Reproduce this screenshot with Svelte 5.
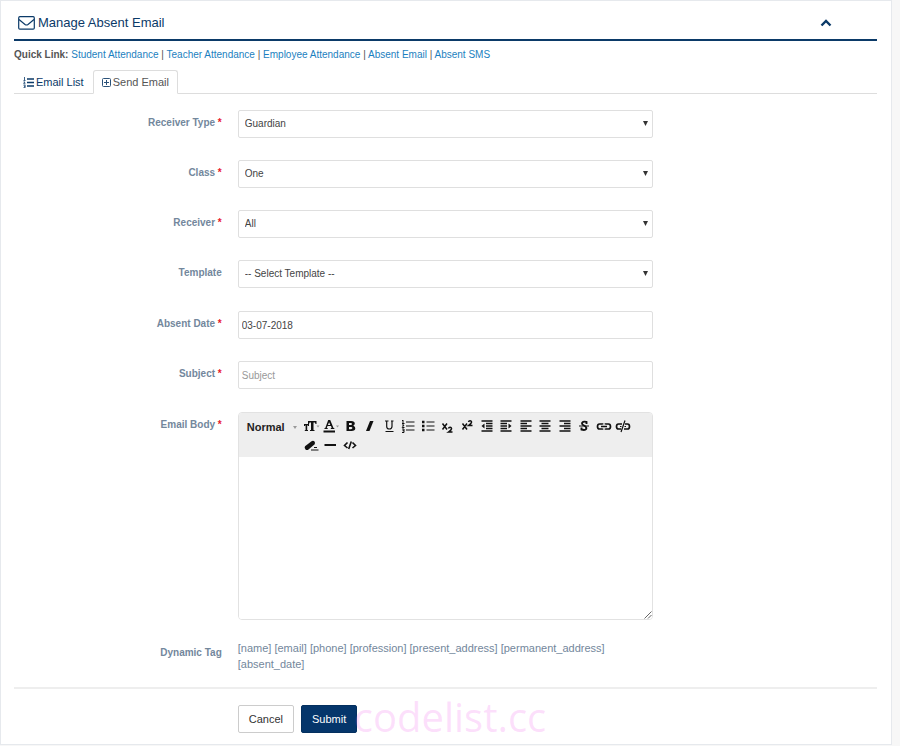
<script>
  let open = $state(true);
  let date = $state('03-07-2018');
  let subject = $state('');

  const links = ['Student Attendance', 'Teacher Attendance', 'Employee Attendance', 'Absent Email', 'Absent SMS'];

  const selects = [
    { id: 'receiver-type', label: 'Receiver Type', required: true, options: ['Guardian', 'Student'] },
    { id: 'class', label: 'Class', required: true, options: ['One', 'Two', 'Three'] },
    { id: 'receiver', label: 'Receiver', required: true, options: ['All'] },
    { id: 'template', label: 'Template', required: false, options: ['-- Select Template --'] }
  ];

  // Tool icons on an 18 x 16 grid: `fill` holds solid parts, `line` strokes, `faint` the menu arrows.
  const tools = [
    { name: 'Font size', fill: 'M6 3h8.500v3h-1l-.5-1.500h-1.500V12h1v1H8v-1h1V4.500H7.500L7 6H6zM2 6h5v2H6l-.3-.8h-.5V12h.8v1H2.800v-1h.8V7.200h-.4L3 8H2z', faint: 'M14.500 7.500h3L16 9.500z' },
    { name: 'Font color', fill: 'M7.200 2h2l3.300 8h.8v1H9.800v-1h.9l-.7-2H6.500l-.7 2h.9v1H3.500v-1h.8zM8.100 4.200L6.900 7h2.400zM2.500 12.500h11.500v2H2.500z', faint: 'M15 7.500h3l-1.500 2z' },
    { name: 'Bold', fill: 'M5.500 3h4.700q3.600 0 3.600 2.600 0 1.600-1.500 2.200Q14.300 8.400 14.300 10.300 14.300 13 10.500 13H5.500zM8 5v2h1.800q1.200 0 1.200-1t-1.200-1zM8 9v2.200h2q1.400 0 1.400-1.100T10 9z' },
    { name: 'Italic', fill: 'M10 3h3.500L9.500 13H6z' },
    { name: 'Underline', line: 'M5 3H8.500M11 3H13.500M6.700 3v5.500q0 2.500 2.600 2.500T12 8.500V3M5.500 13.500h8', w: 1.200 },
    { name: 'Ordered list', line: 'M7 4h8.500M7 8h8.500M7 12h8.500M4 2v3.500M3 2.500h1M3 5.500h2.500M3 7h2L3.200 9.500H5.500M3 11h2v3.500h-2M3.500 12.700h1.500', w: 1 },
    { name: 'Bulleted list', line: 'M7.500 4h8M7.500 8h8M7.500 12h8', fill: 'M3 2.700H5.500v2.600H3zM3 6.700H5.500v2.600H3zM3 10.700H5.500v2.600H3z', w: 1.200 },
    { name: 'Subscript', line: 'M4.500 5.500l4.500 6M9 5.500L4.500 11.500M10.500 10.500q.3-1.200 1.500-1.200 1.700 0 1.500 1.500Q13.300 12 10.500 14H14.500', w: 1.500 },
    { name: 'Superscript', line: 'M4.500 5.500l4.500 6M9 5.500L4.500 11.500M10.500 4q.3-1.200 1.500-1.200 1.700 0 1.500 1.500Q13.300 5.500 10.500 7.500H14.500', w: 1.500 },
    { name: 'Outdent', line: 'M3.500 3h11M8 5.500h6.500M8 8h6.500M8 10.500h6.500M3.500 13h11', fill: 'M3.500 8L6.500 5.500v5z', w: 1.700 },
    { name: 'Indent', line: 'M3.500 3h11M3.500 5.500h6.500M3.500 8h6.500M3.500 10.500h6.500M3.500 13h11', fill: 'M14.500 8L11.500 5.500v5z', w: 1.700 },
    { name: 'Align left', line: 'M3.500 3h11M3.500 5.500h6.500M3.500 8h11M3.500 10.500h6.500M3.500 13h11', w: 1.700 },
    { name: 'Align center', line: 'M3.500 3h11M5.500 5.500h7M3.500 8h11M5.500 10.500h7M3.500 13h11', w: 1.700 },
    { name: 'Align right', line: 'M3.500 3h11M8 5.500h6.500M3.500 8h11M8 10.500h6.500M3.500 13h11', w: 1.700 },
    { name: 'Strikethrough', line: 'M11.500 6V4Q8.500 3 7.300 4.500 6.300 6.200 9 7.500 12 9 11.200 11 10 12.600 6.500 11.500V9.500', w: 1.900, thin: 'M4 8h10' },
    { name: 'Link', line: 'M7.500 6.500V6H4.500Q2.500 6 2.500 8.500T4.500 11H7.500V10.500M10.500 6.500V6H13.500Q15.500 6 15.500 8.500T13.500 11H10.500V10.500M6 8.500H12', w: 1.700 },
    { name: 'Unlink', line: 'M8 6H4.500Q2.500 6 2.500 8.500T4.500 11H7M11 6H13.500Q15.500 6 15.500 8.500T13.500 11H10', w: 1.700, thin: 'M11 2.500L7 14M6 8.500h1.500M10.500 8.500H12' },
    { name: 'Remove format', line: 'M9 13h7.500M12 10.500h3', fill: 'M3 9.200L9.500 4.200q1.700-1 3 .3 1.200 1.700-.1 2.900L6.500 12.500q-1.500 1-3 0Q2 10.800 3 9.200z', w: 1.100 },
    { name: 'Horizontal rule', line: 'M3.500 8h11.500', w: 1.800 },
    { name: 'View source', line: 'M6.500 5.500L3.500 8.500l3 2.500M11.500 5.500l3 3-3 2.500M10.300 4.500l-2.600 7.500', w: 1.600 }
  ];
</script>

{#snippet star(required)}{#if required}<span class="star">*</span>{/if}{/snippet}

<main>
  <section class="panel">
    <header>
      <h1>
        <svg width="17" height="14" viewBox="0 0 17 14" fill="none" stroke="currentColor" stroke-width="1.200" aria-hidden="true">
          <rect x=".7" y=".7" width="15.600" height="12.400" rx="1.200" />
          <path d="M1 3.500L7 8.500q1.500 1 3 0L16 3.500" />
        </svg>
        Manage Absent Email
      </h1>
      <button class="collapse" aria-label="Toggle panel" aria-expanded={open} onclick={() => (open = !open)}>
        <svg width="12" height="8" viewBox="0 0 12 8" fill="none" stroke="currentColor" stroke-width="2.400" aria-hidden="true">
          <path d="M1.500 6.500L6 2l4.500 4.500" />
        </svg>
      </button>
    </header>

    {#if open}
      <nav class="quick">
        <strong>Quick Link:</strong>
        {#each links as link, i}{#if i}{' | '}{/if}<a href="#{link.toLowerCase().replace(' ', '-')}">{link}</a>{/each}
      </nav>

      <nav class="tabs">
        <a href="#list">
          <svg width="11" height="11" viewBox="0 0 11 11" fill="none" stroke="currentColor" aria-hidden="true">
            <path d="M4 2h7M4 5.500h7M4 9h7" stroke-width="1.700" />
            <path d="M1.500 0v3M.5 3.500h2M.5 5h1.500L.7 6.800h1.800M.5 8.200h1.700v2.400H.5M1 9.400h1" stroke-width=".8" />
          </svg>
          Email List
        </a>
        <a href="#send" class="active" aria-current="page">
          <svg width="9" height="9" viewBox="0 0 9 9" fill="none" stroke="#2b5279" aria-hidden="true">
            <rect x=".5" y=".5" width="8" height="8" rx="1" />
            <path d="M4.500 2v5M2 4.500h5" />
          </svg>
          Send Email
        </a>
      </nav>

      <form onsubmit={(e) => e.preventDefault()}>
        <div class="group">
          {#each selects as field}
            <div class="row">
              <label for={field.id}>{field.label} {@render star(field.required)}</label>
              <div class="control">
                <select id={field.id}>
                  {#each field.options as option}<option>{option}</option>{/each}
                </select>
                <svg class="caret" width="5" height="5" viewBox="0 0 5 5" aria-hidden="true"><path d="M0 0h5L2.500 5z" fill="#333" /></svg>
              </div>
            </div>
          {/each}
        </div>

        <div class="group">
          <div class="row">
            <label for="date">Absent Date {@render star(true)}</label>
            <div class="control"><input id="date" type="text" bind:value={date} /></div>
          </div>
          <div class="row">
            <label for="subject">Subject {@render star(true)}</label>
            <div class="control"><input id="subject" type="text" placeholder="Subject" bind:value={subject} /></div>
          </div>
        </div>

        <div class="row">
          <label for="body">Email Body {@render star(true)}</label>
          <div class="control">
            <div class="editor">
              <div class="toolbar">
                <button type="button" class="style">
                  Normal
                  <svg width="4" height="3" viewBox="0 0 4 3" aria-hidden="true"><path d="M0 0h4L2 3z" fill="#999" /></svg>
                </button>
                <div class="tools">
                  {#each tools as tool}
                    <button type="button" aria-label={tool.name}>
                      <svg width="18" height="16" viewBox="0 0 18 16" aria-hidden="true">
                        {#if tool.fill}<path d={tool.fill} fill="#111" fill-rule="evenodd" />{/if}
                        {#if tool.faint}<path d={tool.faint} fill="#999" />{/if}
                        {#if tool.line}<path d={tool.line} fill="none" stroke="#111" stroke-width={tool.w} />{/if}
                        {#if tool.thin}<path d={tool.thin} fill="none" stroke="#111" stroke-width="1.200" />{/if}
                      </svg>
                    </button>
                  {/each}
                </div>
              </div>
              <textarea id="body"></textarea>
              <svg class="grip" width="8" height="8" viewBox="0 0 8 8" fill="none" stroke="#666" aria-hidden="true"><path d="M.5 7.500l7-7M4 7.500L7.500 4" /></svg>
            </div>
          </div>
        </div>

        <div class="row tags">
          <span class="label">Dynamic Tag</span>
          <p class="control">[name] [email] [phone] [profession] [present_address] [permanent_address] [absent_date]</p>
        </div>

        <div class="row actions">
          <div class="control">
            <button type="button">Cancel</button>
            <button type="submit" class="primary">Submit</button>
            <span class="watermark">codelist.cc</span>
          </div>
        </div>
      </form>
    {/if}
  </section>
</main>

<style>
  :global(body) {
    margin: 0;
    background: #f7f7f7;
  }
  main {
    padding: 0 8px 1px 0;
    font: 10px/14px 'Liberation Sans', Arial, sans-serif;
    color: #555;
  }
  main :global(*) {
    box-sizing: border-box;
  }
  button, select, input, textarea {
    font: inherit;
    color: inherit;
    margin: 0;
  }
  svg {
    flex: none;
  }
  a {
    text-decoration: none;
  }
  .panel {
    padding: 0 14px 11px 13px;
    background: #fff;
    border: 1px solid #e6e9ed;
  }
  header {
    display: flex;
    justify-content: space-between;
    align-items: center;
    height: 40px;
    padding: 6px 45px 0 4px;
    border-bottom: 2px solid #0b3a68;
    color: #0b3a68;
  }
  h1 {
    display: flex;
    align-items: center;
    gap: 3px;
    margin: 0;
    font-size: 13px;
    font-weight: 400;
    line-height: 16px;
  }
  .collapse {
    display: flex;
    padding: 0;
    border: 0;
    background: none;
  }
  .quick {
    padding: 7px 0 8px;
  }
  .quick a {
    color: #1b7fc0;
  }
  .tabs {
    display: flex;
    border-bottom: 1px solid #ddd;
    font-size: 11px;
  }
  .tabs a {
    display: flex;
    align-items: center;
    gap: 2px;
    height: 24px;
    margin-bottom: -1px;
    padding: 0 8px;
    border: 1px solid transparent;
    border-radius: 3px 3px 0 0;
    color: #0b3a68;
  }
  .tabs .active {
    border-color: #ddd #ddd #fff;
    background: #fff;
    color: #555;
  }
  form {
    padding-top: 16px;
  }
  .group {
    display: grid;
    gap: 22px;
    margin-bottom: 23px;
  }
  .row {
    display: grid;
    grid-template-columns: 1fr 2fr 1fr;
  }
  label, .label {
    padding: 6px 8px 0;
    text-align: right;
    font-weight: 700;
    color: #73879c;
  }
  .star {
    color: #e8182c;
  }
  .control {
    position: relative;
    grid-column: 2;
    margin: 0 8px;
  }
  select, input {
    display: block;
    width: 100%;
    height: 28px;
    padding: 0 6px;
    appearance: none;
    background: #fff;
    border: 1px solid #dfdfdf;
    border-radius: 2px;
    color: #444;
  }
  input {
    padding: 0 3px;
  }
  input::placeholder {
    color: #999;
  }
  .caret {
    position: absolute;
    right: 5px;
    top: 11px;
    pointer-events: none;
  }
  .editor {
    position: relative;
    border: 1px solid #e2e2e2;
    border-radius: 4px;
    overflow: hidden;
  }
  .toolbar {
    display: flex;
    padding: 3px 19px 3px 0;
    background: #eee;
  }
  .toolbar button {
    display: flex;
    justify-content: center;
    align-items: center;
    height: 19px;
    padding: 0;
    border: 0;
    background: none;
  }
  .toolbar .style {
    justify-content: space-between;
    width: 62px;
    height: 22px;
    padding: 0 4px 0 8px;
    font-size: 11px;
    font-weight: 700;
    color: #222;
  }
  .tools {
    flex: 1;
    display: grid;
    grid-template-columns: repeat(17, 1fr);
  }
  textarea {
    display: block;
    width: 100%;
    height: 162px;
    padding: 8px;
    border: 0;
    outline: 0;
    resize: none;
    background: #fff;
  }
  .grip {
    position: absolute;
    right: 0;
    bottom: 0;
  }
  .tags {
    padding: 20px 0 15px;
    border-bottom: 2px solid #eee;
  }
  .tags p {
    font-size: 11px;
    line-height: 16px;
    color: #73879c;
  }
  .actions {
    padding-top: 16px;
  }
  .actions .control {
    display: flex;
    gap: 7px;
  }
  .actions button {
    height: 28px;
    padding: 0 10px;
    border: 1px solid #ccc;
    border-radius: 2px;
    background: #fff;
    font-size: 11px;
    color: #333;
  }
  .actions .primary {
    border-color: #04305f;
    background: #05366b;
    color: #fff;
  }
  .watermark {
    position: absolute;
    left: 116px;
    bottom: -4px;
    font: 40px/40px 'Open Sans', sans-serif;
    color: rgba(245, 130, 240, 0.25);
    pointer-events: none;
  }
</style>
